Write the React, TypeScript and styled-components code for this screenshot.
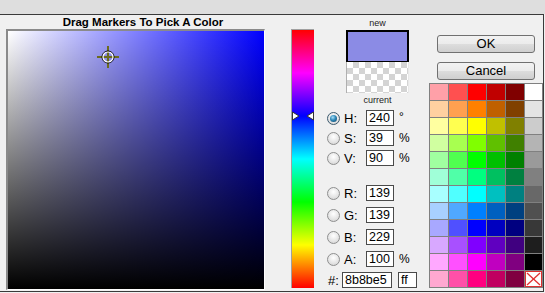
import React from "react";
import styled, { createGlobalStyle } from "styled-components";

const Global = createGlobalStyle`
  html, body { margin: 0; padding: 0; background: #f0f0f0; }
  body { font-family: "Liberation Sans", Arial, sans-serif; }
`;

const Page = styled.div`
  width: 545px;
  height: 293px;
  background: #f0f0f0;
  display: flex;
  flex-direction: column;
  overflow: hidden;
  color: #000;
  font-family: "Liberation Sans", Arial, sans-serif;
`;

const TopStrip = styled.div`
  height: 14px;
  background: #dedede;
  flex: none;
`;

const Body = styled.div`
  box-sizing: border-box;
  width: 544px;
  height: 278px;
  border-top: 1px solid #3a3a3a;
  border-right: 1px solid #3a3a3a;
  border-bottom: 1px solid #3a3a3a;
  background: #f0f0f0;
  display: flex;
  flex: none;
`;

const LeftCol = styled.div`
  margin-left: 6px;
  width: 260px;
  display: flex;
  flex-direction: column;
`;

const Title = styled.div`
  height: 14px;
  line-height: 14px;
  font-size: 11.5px;
  font-weight: bold;
  text-align: center;
  padding-left: 14px;
  white-space: nowrap;
`;

const Field = styled.div`
  position: relative;
  width: 256px;
  height: 258px;
  border-top: 2px solid #8a8a8a;
  border-left: 2px solid #8a8a8a;
  border-right: 1px solid #ffffff;
  border-bottom: 1px solid #ffffff;
  background: linear-gradient(to top, #000 0%, rgba(0, 0, 0, 0) 100%),
    linear-gradient(to right, #ffffff 0%, #0000ff 100%);
`;

const Cross = styled.svg`
  position: absolute;
  left: 89px;
  top: 15px;
`;

const HueCol = styled.div`
  margin-left: 25px;
  width: 23px;
  padding-top: 14px;
`;

const HueBar = styled.div`
  position: relative;
  width: 22px;
  height: 258px;
  border-top: 1px solid #a0a0a0;
  border-left: 1px solid #a0a0a0;
  background: linear-gradient(
    to bottom,
    #ff0000 0%,
    #ff00ff 16.67%,
    #0000ff 33.33%,
    #00ffff 50%,
    #00ff00 66.67%,
    #ffff00 83.33%,
    #ff0000 100%
  );
`;

const HueMarker = styled.svg`
  position: absolute;
  left: 0;
  top: 81px;
`;

const Controls = styled.div`
  width: 115px;
  display: flex;
  flex-direction: column;
`;

const SwatchBlock = styled.div`
  margin-left: 32px;
  width: 63px;
  display: flex;
  flex-direction: column;
`;

const SmallLabel = styled.div`
  height: 13px;
  line-height: 13px;
  font-size: 9px;
  text-align: center;
  color: #222;
  padding-top: ${(p: { $top?: number }) => p.$top ?? 0}px;
`;

const NewSwatch = styled.div<{ $color: string }>`
  box-sizing: border-box;
  height: 32px;
  background: ${(p) => p.$color};
  border: 2px solid #000;
  border-bottom-width: 1px;
`;

const CurrentSwatch = styled.div`
  box-sizing: border-box;
  height: 31px;
  border-left: 1px solid #b0b0b0;
  border-right: 1px solid #e8e8e8;
  background: repeating-conic-gradient(#d4d4d4 0% 25%, #ffffff 0% 50%) 0 0 / 12px 12px;
`;

const Rows = styled.div`
  display: flex;
  flex-direction: column;
  margin-top: 1px;
`;

const Row = styled.div<{ $h: number; $gapTop?: number }>`
  height: ${(p) => p.$h}px;
  margin-top: ${(p) => p.$gapTop ?? 0}px;
  display: flex;
  align-items: center;
  padding-left: 13px;
`;

const Radio = styled.span<{ $on?: boolean }>`
  box-sizing: border-box;
  width: 13px;
  height: 13px;
  border-radius: 50%;
  border: 1px solid ${(p) => (p.$on ? "#3c5a6e" : "#8e8f8f")};
  background: radial-gradient(circle at 50% 35%, #ffffff 0%, #e6e6e6 55%, #cfcfcf 100%);
  display: flex;
  align-items: center;
  justify-content: center;
  flex: none;
  &::after {
    content: "";
    display: ${(p) => (p.$on ? "block" : "none")};
    width: 7px;
    height: 7px;
    border-radius: 50%;
    background: radial-gradient(circle at 40% 35%, #a8e0f8 0%, #2d87b8 45%, #0e3f5e 100%);
  }
`;

const Label = styled.span<{ $w: number; $ml?: number }>`
  width: ${(p) => p.$w}px;
  margin-left: ${(p) => p.$ml ?? 0}px;
  font-size: 13px;
  flex: none;
`;

const Box = styled.span<{ $w: number }>`
  box-sizing: border-box;
  width: ${(p) => p.$w}px;
  height: 16px;
  border: 1px solid #4a4a4a;
  background: #fff;
  font-size: 12.5px;
  line-height: 14px;
  padding-left: 2px;
  flex: none;
  white-space: nowrap;
  overflow: hidden;
`;

const Unit = styled.span<{ $sup?: boolean }>`
  margin-left: 5px;
  font-size: 12px;
  align-self: ${(p) => (p.$sup ? "flex-start" : "center")};
  margin-top: ${(p) => (p.$sup ? "2px" : "0")};
`;

const RightCol = styled.div`
  width: 114px;
  display: flex;
  flex-direction: column;
`;

const Button = styled.div<{ $mt: number }>`
  box-sizing: border-box;
  margin-top: ${(p) => p.$mt}px;
  margin-left: 8px;
  width: 98px;
  height: 18px;
  border: 1px solid #707070;
  border-radius: 3px;
  background: linear-gradient(to bottom, #f2f2f2 0%, #ebebeb 50%, #dddddd 51%, #cfcfcf 100%);
  font-size: 13px;
  line-height: 16px;
  text-align: center;
`;

const Palette = styled.div`
  margin-top: 3px;
  display: grid;
  grid-template-columns: repeat(5, 18px) 17px;
  grid-auto-rows: 16px;
  gap: 1px;
  padding: 1px;
  width: max-content;
  background: #808080;
`;

const Cell = styled.div<{ $c: string }>`
  background: ${(p) => p.$c};
`;

const NoneCell = styled.div`
  box-sizing: border-box;
  background: #fff;
  border: 1px solid #e03030;
  display: flex;
`;

const palette: string[][] = [
  ["#ffa0a8", "#ff5050", "#ff0000", "#c00000", "#800000", "#ffffff"],
  ["#ffd0a0", "#ffa050", "#ff8000", "#c06000", "#804000", "#e4e4e4"],
  ["#ffffa0", "#ffff50", "#ffff00", "#c0c000", "#808000", "#cccccc"],
  ["#d0ffa0", "#a8ff50", "#80ff00", "#60c000", "#408000", "#b4b4b4"],
  ["#a0ffa0", "#50ff50", "#00ff00", "#00c000", "#008000", "#9a9a9a"],
  ["#a0ffd8", "#50ffa8", "#00ff80", "#00c060", "#008040", "#808080"],
  ["#a8ffff", "#50ffff", "#00ffff", "#00c0c0", "#008080", "#686868"],
  ["#a8d0ff", "#50a8ff", "#0080ff", "#0060c0", "#004080", "#505050"],
  ["#a8a8ff", "#5050ff", "#0000ff", "#0000c0", "#000080", "#383838"],
  ["#d8a8ff", "#a850ff", "#8000ff", "#6000c0", "#400080", "#1e1e1e"],
  ["#ffa8ff", "#ff50ff", "#ff00ff", "#c000c0", "#800080", "#000000"],
  ["#ffa8d0", "#ff50a8", "#ff0080", "#c00060", "#800040", "none"],
];

type RowDef = {
  key: string;
  value: string;
  unit?: string;
  sup?: boolean;
  on?: boolean;
  h: number;
  gap?: number;
};

const rows: RowDef[] = [
  { key: "H:", value: "240", unit: "°", sup: true, on: true, h: 20 },
  { key: "S:", value: "39", unit: "%", h: 20 },
  { key: "V:", value: "90", unit: "%", h: 20 },
  { key: "R:", value: "139", h: 22, gap: 14 },
  { key: "G:", value: "139", h: 22 },
  { key: "B:", value: "229", h: 22 },
  { key: "A:", value: "100", unit: "%", h: 22 },
];

export default function App() {
  return (
    <Page>
      <Global />
      <TopStrip />
      <Body>
        <LeftCol>
          <Title>Drag Markers To Pick A Color</Title>
          <Field>
            <Cross width="22" height="22" viewBox="0 0 22 22">
              <line x1="0" y1="11" x2="22" y2="11" stroke="#6b6b1e" strokeWidth="2" />
              <line x1="11" y1="0" x2="11" y2="22" stroke="#6b6b1e" strokeWidth="2" />
              <circle cx="11" cy="11" r="6" fill="none" stroke="#000" strokeWidth="1" />
              <circle cx="11" cy="11" r="5" fill="none" stroke="#fff" strokeWidth="1.2" />
            </Cross>
          </Field>
        </LeftCol>
        <HueCol>
          <HueBar>
            <HueMarker width="22" height="10" viewBox="0 0 22 10">
              <polygon points="0.5,1 7,5 0.5,9" fill="#fff" stroke="#333" strokeWidth="1" />
              <polygon points="21.5,1 15,5 21.5,9" fill="#fff" stroke="#333" strokeWidth="1" />
            </HueMarker>
          </HueBar>
        </HueCol>
        <Controls>
          <SwatchBlock>
            <SmallLabel $top={2}>new</SmallLabel>
            <NewSwatch $color="#8b8be5" />
            <CurrentSwatch />
            <SmallLabel $top={1}>current</SmallLabel>
          </SwatchBlock>
          <Rows>
            {rows.map((r) => (
              <Row key={r.key} $h={r.h} $gapTop={r.gap}>
                <Radio $on={r.on} />
                <Label $w={22} $ml={4}>
                  {r.key}
                </Label>
                <Box $w={28}>{r.value}</Box>
                {r.unit && <Unit $sup={r.sup}>{r.unit}</Unit>}
              </Row>
            ))}
            <Row $h={20}>
              <Label $w={14} $ml={1}>
                #:
              </Label>
              <Box $w={50}>8b8be5</Box>
              <Box $w={19} style={{ marginLeft: 6 }}>
                ff
              </Box>
            </Row>
          </Rows>
        </Controls>
        <RightCol>
          <Button $mt={20}>OK</Button>
          <Button $mt={9}>Cancel</Button>
          <Palette>
            {palette.flat().map((c, i) =>
              c === "none" ? (
                <NoneCell key={i}>
                  <svg width="15" height="14" viewBox="0 0 15 14">
                    <line x1="1" y1="1" x2="14" y2="13" stroke="#e03030" strokeWidth="1.3" />
                    <line x1="14" y1="1" x2="1" y2="13" stroke="#e03030" strokeWidth="1.3" />
                  </svg>
                </NoneCell>
              ) : (
                <Cell key={i} $c={c} />
              )
            )}
          </Palette>
        </RightCol>
      </Body>
    </Page>
  );
}
